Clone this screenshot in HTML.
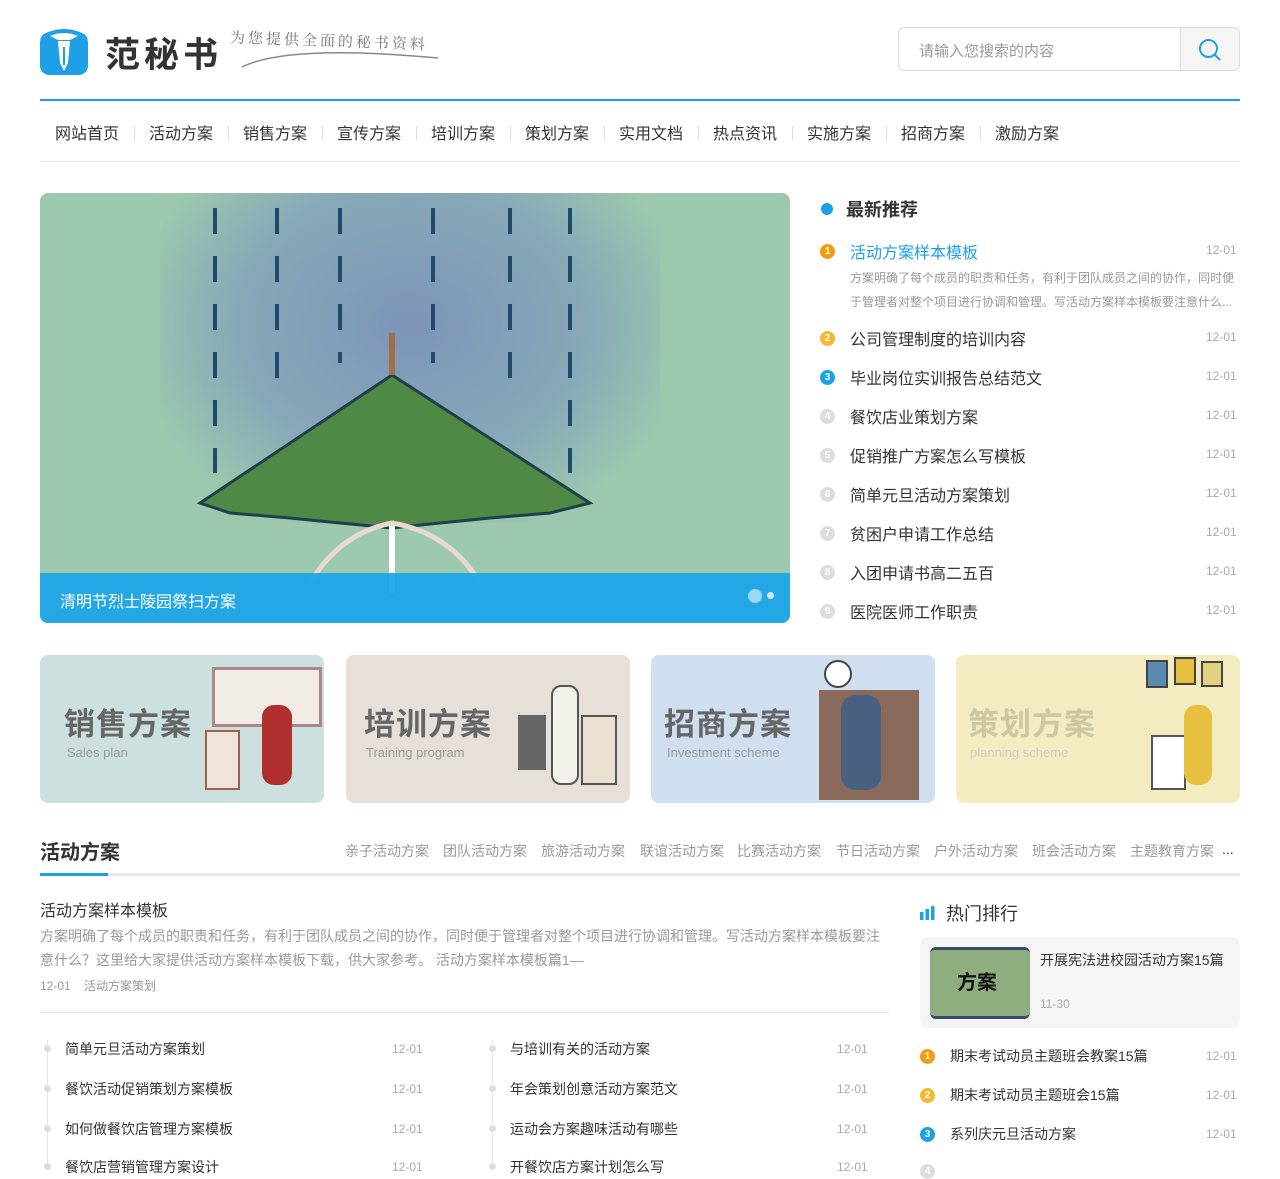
<!DOCTYPE html>
<html><head><meta charset="utf-8"><style>
*{margin:0;padding:0;box-sizing:border-box}
body{width:1280px;height:1167px;overflow:hidden;background:#fff;font-family:"Liberation Sans","Noto Sans CJK SC",sans-serif;color:#333;position:relative}
.a{position:absolute}
.nav span{position:absolute;top:120px;font-size:16px;color:#333}
.sep{position:absolute;top:126px;width:1px;height:14px;background:#ddd}
.num{position:absolute;left:820px;width:15px;height:15px;border-radius:50%;color:#fff;font-size:10px;text-align:center;line-height:15px;font-weight:bold}
.rt{position:absolute;left:850px;font-size:16px;color:#333}
.dt{position:absolute;left:1206px;font-size:12px;color:#aaa}
.card{position:absolute;top:655px;width:284px;height:148px;border-radius:8px;overflow:hidden}
.card b{position:absolute;left:24px;top:44px;font-size:31px;color:#666;font-weight:bold;letter-spacing:1px}
.card i{position:absolute;left:27px;top:90px;font-size:13px;font-style:normal;color:#999}
.tags span{position:absolute;top:841px;font-size:14px;color:#999}
.li{position:absolute;font-size:14px;color:#333}
.ld{position:absolute;font-size:12px;color:#aaa}
.dot{position:absolute;width:7px;height:7px;border-radius:50%;background:#ddd}
</style></head><body>
<svg class="a" style="left:40px;top:25px" width="48" height="52" viewBox="0 0 48 52"><path d="M6 8 Q24 0 42 8 Q48 10 48 18 V40 Q48 48 40 50 H8 Q0 48 0 40 V18 Q0 10 6 8Z" fill="#1ea0e6"/><path d="M10 11 Q24 5 38 11 L30 15 H18Z" fill="#fff"/><path d="M18 16 H30 L28 38 L24 46 L20 38Z" fill="#fff"/><path d="M24 22 V40" stroke="#1ea0e6" stroke-width="2"/></svg>
<div class="a" style="left:105px;top:27px;font-size:35px;font-weight:bold;color:#333;letter-spacing:4px">范秘书</div>
<div class="a" style="left:230px;top:30px;font-size:15px;color:#777;font-family:'Noto Serif CJK SC',serif;transform:rotate(2deg);letter-spacing:3px">为您提供全面的秘书资料</div>
<svg class="a" style="left:238px;top:38px" width="205" height="32"><path d="M4 29 Q50 6 200 20" stroke="#888" stroke-width="1.5" fill="none"/></svg>
<div class="a" style="left:898px;top:27px;width:342px;height:44px;border:1px solid #ddd;border-radius:6px;overflow:hidden">
<div class="a" style="left:20px;top:12px;font-size:15px;color:#999">请输入您搜索的内容</div>
<div class="a" style="left:281px;top:0;width:61px;height:44px;background:#f5f5f5;border-left:1px solid #ddd"></div>
<svg class="a" style="left:299px;top:10px" width="24" height="24"><circle cx="10.5" cy="10.5" r="8.5" stroke="#1ea0e6" stroke-width="2" fill="none"/><path d="M17 17 L22 22" stroke="#1ea0e6" stroke-width="2"/></svg>
</div>
<div class="a" style="left:40px;top:99px;width:1200px;height:2px;background:#1ea0e6"></div>
<div class="nav">
<span style="left:55px">网站首页</span><span style="left:149px">活动方案</span><span style="left:243px">销售方案</span><span style="left:337px">宣传方案</span><span style="left:431px">培训方案</span><span style="left:525px">策划方案</span><span style="left:619px">实用文档</span><span style="left:713px">热点资讯</span><span style="left:807px">实施方案</span><span style="left:901px">招商方案</span><span style="left:995px">激励方案</span>
</div>
<div class="sep" style="left:134px"></div><div class="sep" style="left:228px"></div><div class="sep" style="left:322px"></div><div class="sep" style="left:416px"></div><div class="sep" style="left:510px"></div><div class="sep" style="left:604px"></div><div class="sep" style="left:698px"></div><div class="sep" style="left:792px"></div><div class="sep" style="left:886px"></div><div class="sep" style="left:980px"></div>
<div class="a" style="left:40px;top:161px;width:1200px;height:1px;background:#e5e5e5"></div>
<div class="a" style="left:40px;top:193px;width:750px;height:430px;border-radius:8px;overflow:hidden;background:#9cc9ae">
<div class="a" style="left:120px;top:0;width:500px;height:330px;background:radial-gradient(ellipse at 50% 40%,#7d95b8 0%,#88a9b8 50%,#9cc9ae 80%)"></div>
<svg class="a" style="left:0;top:0" width="750" height="430">
<g stroke="#1f4a6a" stroke-width="4" stroke-dasharray="26 22"><path d="M175 15 V280"/><path d="M237 15 V200"/><path d="M300 15 V170"/><path d="M393 15 V170"/><path d="M470 15 V200"/><path d="M530 15 V280"/></g>
<polygon points="352,182 160,310 190,320 250,325 300,330 352,335 400,330 450,325 510,320 550,310" fill="#4e8a46" stroke="#1f3f4a" stroke-width="3"/>
<path d="M352 140 V182" stroke="#a07040" stroke-width="6"/>
<path d="M352 330 V400" stroke="#fff" stroke-width="6"/>
<path d="M270 390 Q300 340 352 330 Q410 340 440 390" stroke="#e8d8d0" stroke-width="5" fill="none"/>
</svg>
<div class="a" style="left:0;top:380px;width:750px;height:50px;background:rgba(30,165,232,.95)"></div>
<div class="a" style="left:20px;top:395px;font-size:16px;color:#fff">清明节烈士陵园祭扫方案</div>
<div class="a" style="left:708px;top:396px;width:14px;height:14px;border-radius:50%;background:#9cd6f3"></div>
<div class="a" style="left:727px;top:399px;width:7px;height:7px;border-radius:50%;background:#cde9f8"></div>
</div>
<div class="a" style="left:821px;top:203px;width:12px;height:12px;border-radius:50%;background:#1ea0e6"></div>
<div class="a" style="left:846px;top:196px;font-size:18px;font-weight:bold;color:#333">最新推荐</div>
<div class="num" style="top:244px;background:#f39c12">1</div><div class="rt" style="top:239px;color:#1ea0e6">活动方案样本模板</div><div class="dt" style="top:243px">12-01</div>
<div class="a" style="left:850px;top:266px;width:390px;font-size:12px;color:#999;line-height:24px">方案明确了每个成员的职责和任务，有利于团队成员之间的协作，同时便于管理者对整个项目进行协调和管理。写活动方案样本模板要注意什么...</div>
<div class="num" style="top:331px;background:#f5b82e">2</div><div class="rt" style="top:326px">公司管理制度的培训内容</div><div class="dt" style="top:330px">12-01</div>
<div class="num" style="top:370px;background:#1ea0e6">3</div><div class="rt" style="top:365px">毕业岗位实训报告总结范文</div><div class="dt" style="top:369px">12-01</div>
<div class="num" style="top:409px;background:#ddd">4</div><div class="rt" style="top:404px">餐饮店业策划方案</div><div class="dt" style="top:408px">12-01</div>
<div class="num" style="top:448px;background:#ddd">5</div><div class="rt" style="top:443px">促销推广方案怎么写模板</div><div class="dt" style="top:447px">12-01</div>
<div class="num" style="top:487px;background:#ddd">6</div><div class="rt" style="top:482px">简单元旦活动方案策划</div><div class="dt" style="top:486px">12-01</div>
<div class="num" style="top:526px;background:#ddd">7</div><div class="rt" style="top:521px">贫困户申请工作总结</div><div class="dt" style="top:525px">12-01</div>
<div class="num" style="top:565px;background:#ddd">8</div><div class="rt" style="top:560px">入团申请书高二五百</div><div class="dt" style="top:564px">12-01</div>
<div class="num" style="top:604px;background:#ddd">9</div><div class="rt" style="top:599px">医院医师工作职责</div><div class="dt" style="top:603px">12-01</div>
<div class="card" style="left:40px;background:#cde0e0"><b>销售方案</b><i>Sales plan</i><div class="a" style="left:172px;top:12px;width:110px;height:60px;background:#f2ece6;border:3px solid #aa8888"></div><div class="a" style="left:165px;top:75px;width:35px;height:60px;background:#f0e4da;border:2px solid #a06050"></div><div class="a" style="left:222px;top:50px;width:30px;height:80px;background:#b03030;border-radius:12px"></div></div>
<div class="card" style="left:346px;background:#e6e0d8"><b style="left:18px">培训方案</b><i style="left:20px">Training program</i><div class="a" style="left:205px;top:30px;width:28px;height:100px;background:#f4f0ea;border:2px solid #555;border-radius:10px"></div><div class="a" style="left:235px;top:60px;width:36px;height:70px;background:#e8e0d0;border:2px solid #555"></div><div class="a" style="left:172px;top:60px;width:28px;height:55px;background:#666"></div></div>
<div class="card" style="left:651px;background:#cfdff0"><b style="left:13px">招商方案</b><i style="left:16px">Investment scheme</i><div class="a" style="left:168px;top:35px;width:100px;height:110px;background:#8a6a5a"></div><div class="a" style="left:190px;top:40px;width:40px;height:95px;background:#4a6080;border-radius:14px"></div><div class="a" style="left:173px;top:5px;width:28px;height:28px;border-radius:50%;background:#fff;border:2px solid #444"></div></div>
<div class="card" style="left:956px;background:#f3ecc0"><b style="color:#ccc8a0;left:12px">策划方案</b><i style="color:#ccc;left:14px">planning scheme</i><div class="a" style="left:190px;top:5px;width:22px;height:28px;background:#5a8ab0;border:2px solid #444"></div><div class="a" style="left:218px;top:2px;width:22px;height:28px;background:#e8c040;border:2px solid #444"></div><div class="a" style="left:245px;top:6px;width:22px;height:26px;background:#e0d080;border:2px solid #444"></div><div class="a" style="left:195px;top:80px;width:35px;height:55px;background:#fff;border:2px solid #555"></div><div class="a" style="left:228px;top:50px;width:28px;height:80px;background:#e8c040;border-radius:12px"></div></div>
<div class="a" style="left:40px;top:836px;font-size:20px;font-weight:bold;color:#333">活动方案</div>
<div class="tags"><span style="left:345px">亲子活动方案</span><span style="left:443px">团队活动方案</span><span style="left:541px">旅游活动方案</span><span style="left:640px">联谊活动方案</span><span style="left:737px">比赛活动方案</span><span style="left:836px">节日活动方案</span><span style="left:934px">户外活动方案</span><span style="left:1032px">班会活动方案</span><span style="left:1130px">主题教育方案</span><span style="left:1222px;color:#333">...</span></div>
<div class="a" style="left:40px;top:873px;width:1200px;height:3px;background:#e8e8e8"></div>
<div class="a" style="left:40px;top:873px;width:68px;height:3px;background:#1ea0e6"></div>
<div class="a" style="left:40px;top:897px;font-size:16px;color:#333">活动方案样本模板</div>
<div class="a" style="left:40px;top:924px;width:850px;font-size:14px;color:#999;line-height:24px">方案明确了每个成员的职责和任务，有利于团队成员之间的协作，同时便于管理者对整个项目进行协调和管理。写活动方案样本模板要注意什么？这里给大家提供活动方案样本模板下载，供大家参考。 活动方案样本模板篇1—</div>
<div class="a" style="left:40px;top:977px;font-size:12px;color:#999">12-01 &nbsp;&nbsp;&nbsp;活动方案策划</div>
<div class="a" style="left:40px;top:1012px;width:850px;height:1px;background:#e5e5e5"></div>
<div class="a" style="left:47px;top:1040px;width:1px;height:130px;background:#e5e5e5"></div>
<div class="a" style="left:492px;top:1040px;width:1px;height:130px;background:#e5e5e5"></div>
<div class="dot" style="left:44px;top:1045px"></div><div class="dot" style="left:44px;top:1085px"></div><div class="dot" style="left:44px;top:1125px"></div><div class="dot" style="left:44px;top:1163px"></div>
<div class="dot" style="left:489px;top:1045px"></div><div class="dot" style="left:489px;top:1085px"></div><div class="dot" style="left:489px;top:1125px"></div><div class="dot" style="left:489px;top:1163px"></div>
<div class="li" style="left:65px;top:1039px">简单元旦活动方案策划</div><div class="ld" style="left:392px;top:1042px">12-01</div>
<div class="li" style="left:65px;top:1079px">餐饮活动促销策划方案模板</div><div class="ld" style="left:392px;top:1082px">12-01</div>
<div class="li" style="left:65px;top:1119px">如何做餐饮店管理方案模板</div><div class="ld" style="left:392px;top:1122px">12-01</div>
<div class="li" style="left:65px;top:1157px">餐饮店营销管理方案设计</div><div class="ld" style="left:392px;top:1160px">12-01</div>
<div class="li" style="left:510px;top:1039px">与培训有关的活动方案</div><div class="ld" style="left:837px;top:1042px">12-01</div>
<div class="li" style="left:510px;top:1079px">年会策划创意活动方案范文</div><div class="ld" style="left:837px;top:1082px">12-01</div>
<div class="li" style="left:510px;top:1119px">运动会方案趣味活动有哪些</div><div class="ld" style="left:837px;top:1122px">12-01</div>
<div class="li" style="left:510px;top:1157px">开餐饮店方案计划怎么写</div><div class="ld" style="left:837px;top:1160px">12-01</div>
<svg class="a" style="left:920px;top:906px" width="16" height="14"><rect x="0" y="6" width="3.5" height="8" fill="#1ea0e6"/><rect x="5.5" y="3" width="3.5" height="11" fill="#1ea0e6"/><rect x="11" y="0" width="3.5" height="14" fill="#1ea0e6"/></svg>
<div class="a" style="left:946px;top:900px;font-size:18px;color:#333">热门排行</div>
<div class="a" style="left:920px;top:937px;width:320px;height:91px;background:#f5f5f5;border-radius:8px"></div>
<div class="a" style="left:930px;top:947px;width:100px;height:72px;border-radius:6px;background:#8fae80;border-top:3px solid #3a4a6a;border-bottom:3px solid #3a4a6a"></div>
<div class="a" style="left:957px;top:966px;font-size:20px;font-weight:bold;color:#111">方案</div>
<div class="a" style="left:1040px;top:950px;font-size:14px;color:#333">开展宪法进校园活动方案15篇</div>
<div class="a" style="left:1040px;top:997px;font-size:12px;color:#aaa">11-30</div>
<div class="num" style="left:920px;top:1049px;background:#f39c12">1</div><div class="li" style="left:950px;top:1046px">期末考试动员主题班会教案15篇</div><div class="dt" style="top:1049px">12-01</div>
<div class="num" style="left:920px;top:1088px;background:#f5b82e">2</div><div class="li" style="left:950px;top:1085px">期末考试动员主题班会15篇</div><div class="dt" style="top:1088px">12-01</div>
<div class="num" style="left:920px;top:1127px;background:#1ea0e6">3</div><div class="li" style="left:950px;top:1124px">系列庆元旦活动方案</div><div class="dt" style="top:1127px">12-01</div>
<div class="num" style="left:920px;top:1164px;background:#ddd">4</div>
</body></html>
